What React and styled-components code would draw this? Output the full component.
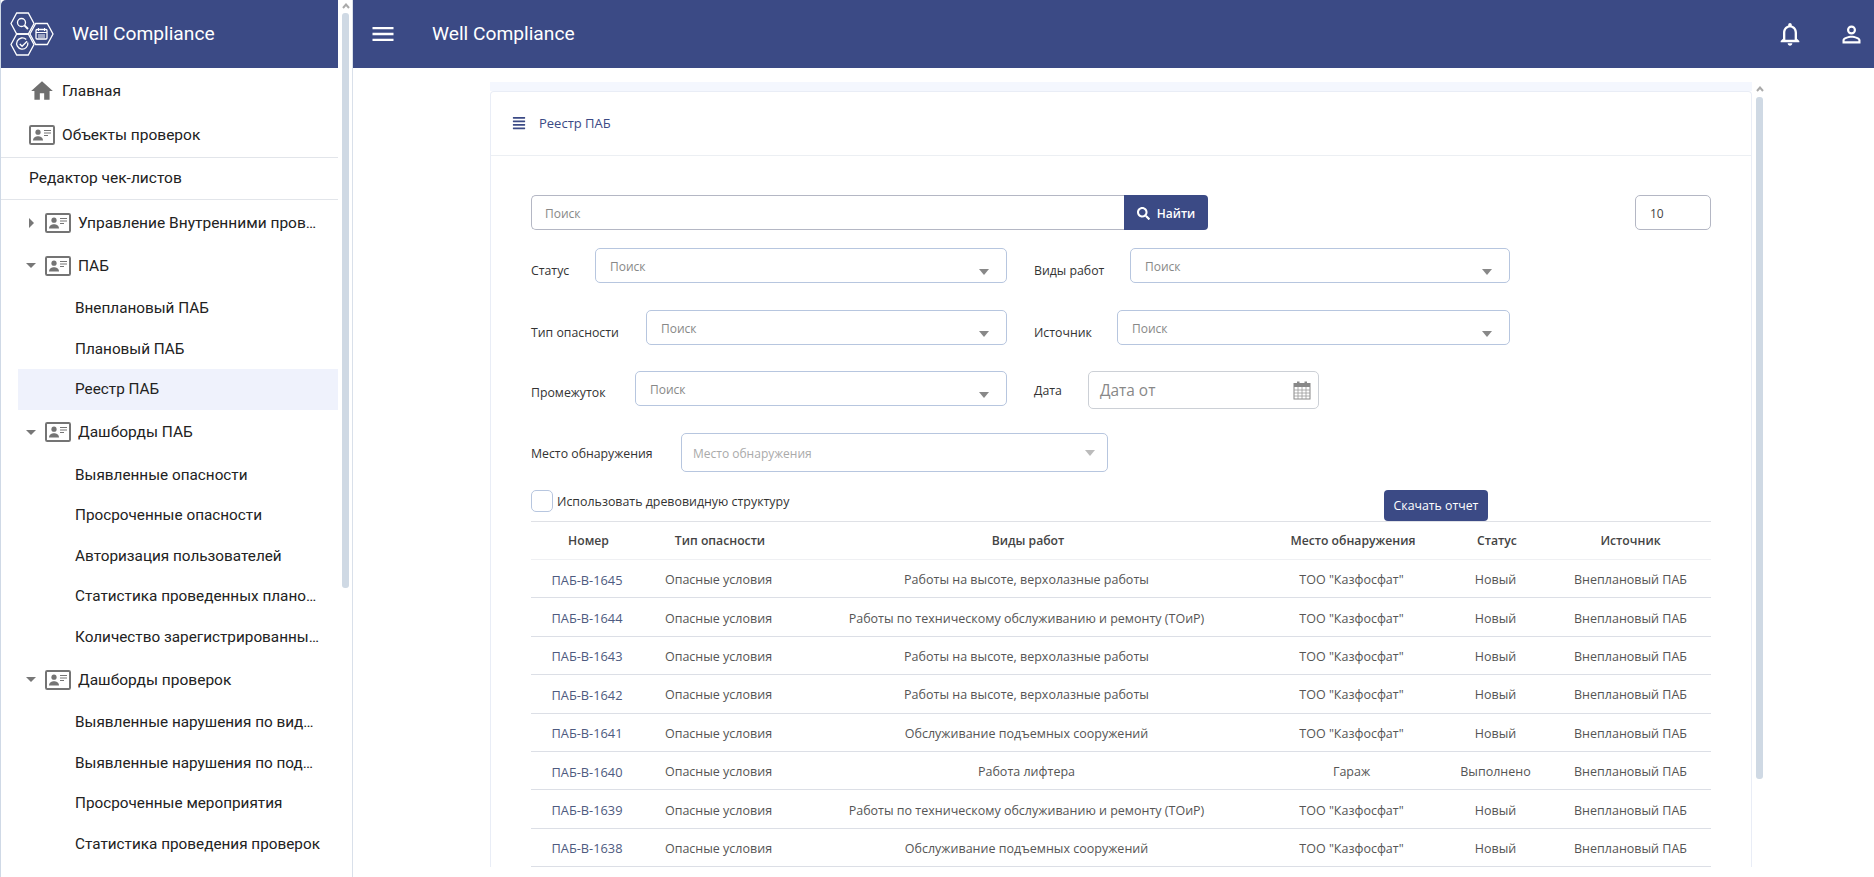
import styled, { createGlobalStyle } from "styled-components";
import { MdHome, MdMenu, MdNotificationsNone, MdPersonOutline } from "react-icons/md";
import { FaAlignJustify, FaSearch } from "react-icons/fa";

const BLUE = "#3b4a85";

const GlobalStyle = createGlobalStyle`
    html, body {
        margin: 0;
        height: 100%;
        overflow: hidden;
        background: #fff;
    }
    * {
        box-sizing: border-box;
    }
`

const Page = styled.div`
    display: flex;
    height: 877px;
    overflow: hidden;
`

const Sidebar = styled.aside`
    display: flex;
    width: 353px;
    flex-shrink: 0;
    height: 100%;
    border-left: 1px solid #cfd9e6;
    border-right: 1px solid #d9e0ea;
    font-family: Roboto, sans-serif;
`

const SideColumn = styled.div`
    width: 337px;
    flex-shrink: 0;
`

const Brand = styled.div`
    display: flex;
    align-items: center;
    height: 68px;
    padding-left: 7px;
    gap: 16px;
    background: ${BLUE};
    border-top-left-radius: 5px;
    color: #fff;
    font-size: 19.2px;
`

const BrandName = styled.span`
    margin-top: -2px;
`

const ScrollTrack = styled.div`
    display: flex;
    flex-direction: column;
    align-items: center;
    width: ${p => p.$w}px;
    margin-left: ${p => p.$left}px;
    flex-shrink: 0;
`

const ArrowUp = styled.svg`
    width: 8px;
    height: 6px;
    margin-top: ${p => p.$top}px;
    margin-bottom: ${p => p.$bottom}px;
`

const Thumb = styled.div`
    width: 7px;
    height: ${p => p.$h}px;
    border-radius: 3px;
    background: #cfd9e4;
`

const TopItem = styled.div`
    display: flex;
    align-items: center;
    height: 44px;
    padding-left: 28px;
    gap: 7px;
    font-size: 15.5px;
    color: #222;
`

const TopList = styled.div`
    padding-top: 1px;
    border-bottom: 1px solid #e2e5ea;
`

const EditorItem = styled.div`
    display: flex;
    align-items: center;
    height: 42px;
    padding: 0 0 2px 28px;
    border-bottom: 1px solid #e2e5ea;
    font-size: 15.5px;
    color: #222;
`

const Tree = styled.div`
    padding-top: 2px;
`

const GroupRow = styled.div`
    display: flex;
    align-items: center;
    height: 41px;
    margin-bottom: 2px;
    font-size: 15.5px;
    color: #222;
`

const CaretSlot = styled.div`
    display: flex;
    justify-content: center;
    width: 44px;
    padding-left: 16px;
    flex-shrink: 0;
`

const TreeCaret = styled.span`
    width: 0;
    height: 0;
    ${p => p.$open ? `
        border-left: 5px solid transparent;
        border-right: 5px solid transparent;
        border-top: 5px solid #777;
    ` : `
        border-top: 5px solid transparent;
        border-bottom: 5px solid transparent;
        border-left: 5px solid #777;
    `}
`

const GroupLabel = styled.span`
    margin-left: 7px;
    width: 244px;
    white-space: nowrap;
    overflow: hidden;
    text-overflow: ellipsis;
`

const SubList = styled.div`
    padding-bottom: 2px;
`

const SubItem = styled.div`
    height: 40.5px;
    line-height: 40.5px;
    margin-left: 17px;
    padding: 0 17px 0 57px;
    font-size: 15.3px;
    color: #222;
    white-space: nowrap;
    overflow: hidden;
    text-overflow: ellipsis;
    background: ${p => p.$active ? "#eff2fc" : "transparent"};
`

const Main = styled.div`
    display: flex;
    flex-direction: column;
    flex: 1;
    min-width: 0;
    font-family: "Open Sans", sans-serif;
`

const Topbar = styled.header`
    display: flex;
    align-items: center;
    height: 68px;
    flex-shrink: 0;
    padding: 0 9px 0 16px;
    background: ${BLUE};
    color: #fff;
    font-family: Roboto, sans-serif;
    font-size: 19.2px;
`

const Title = styled.div`
    margin: -2px 0 0 35px;
    flex: 1;
`

const TopIcons = styled.div`
    display: flex;
    align-items: center;
    gap: 34px;
`

const Content = styled.div`
    display: flex;
    flex: 1;
    min-height: 0;
    padding: 14px 0 0 137px;
    overflow: hidden;
`

const CardWrap = styled.div`
    width: 1262px;
    flex-shrink: 0;
    padding-top: 9px;
    background: linear-gradient(#f4f7fe 9px, #fff 9px);
`

const Card = styled.section`
    background: #fff;
    border: 1px solid #e9edf6;
    border-bottom: 0;
    border-radius: 4px 4px 0 0;
`

const CardHead = styled.div`
    display: flex;
    align-items: center;
    height: 64px;
    padding: 0 0 2px 21px;
    gap: 13px;
    border-bottom: 1px solid #eceff3;
    color: ${BLUE};
    font-size: 13px;
`

const CardBody = styled.div`
    padding: 39px 40px 0;
`

const SearchRow = styled.div`
    display: flex;
    justify-content: space-between;
    height: 35px;
`

const SearchGroup = styled.div`
    display: flex;
    width: 677px;
`

const SearchInput = styled.div`
    display: flex;
    align-items: center;
    flex: 1;
    padding: 2px 0 0 13px;
    border: 1px solid #b4b7c4;
    border-right: 0;
    border-radius: 5px 0 0 5px;
    font-size: 12px;
    color: #888;
`

const SearchButton = styled.button`
    display: flex;
    align-items: center;
    justify-content: center;
    gap: 7px;
    width: 84px;
    padding: 2px 0 0;
    border: 0;
    border-radius: 0 4px 4px 0;
    background: ${BLUE};
    color: #fff;
    font-family: inherit;
    font-size: 12px;
    font-weight: 600;
`

const LimitInput = styled.div`
    display: flex;
    align-items: center;
    width: 76px;
    padding: 2px 0 0 14px;
    border: 1px solid #b4b7c4;
    border-radius: 5px;
    font-size: 12px;
    color: #444;
`

const FilterRow = styled.div`
    display: flex;
    gap: 27px;
    margin-top: ${p => p.$top}px;
`

const Field = styled.div`
    display: flex;
    width: ${p => p.$w}px;
`

const FieldLabel = styled.label`
    width: ${p => p.$w}px;
    flex-shrink: 0;
    font-size: 12.3px;
    line-height: 16px;
    color: #333;
    padding-top: ${p => p.$top}px;
    white-space: nowrap;
`

const Select = styled.div`
    display: flex;
    align-items: center;
    justify-content: space-between;
    flex: 1;
    height: ${p => p.$h || 35}px;
    padding: 2px ${p => p.$light ? 12 : 17}px 0 ${p => p.$light ? 11 : 14}px;
    border: 1px solid #b7c6df;
    border-radius: 5px;
    font-size: 12px;
    color: ${p => p.$light ? "#aaa" : "#888"};
`

const SelectCaret = styled.span`
    width: 0;
    height: 0;
    margin-top: ${p => p.$light ? -2 : 10}px;
    border-left: 5px solid transparent;
    border-right: 5px solid transparent;
    border-top: 6px solid ${p => p.$light ? "#bbb" : "#888"};
`

const DateInput = styled.div`
    display: flex;
    align-items: center;
    justify-content: space-between;
    flex: 1;
    height: 38px;
    padding: 0 7px 0 11px;
    border: 1px solid #ccd0d6;
    border-radius: 5px;
    font-size: 15.4px;
    color: #888;
`

const ToolRow = styled.div`
    display: flex;
    justify-content: space-between;
    align-items: flex-start;
    height: 31px;
    margin-top: 18px;
`

const CheckLabel = styled.label`
    display: flex;
    align-items: center;
    gap: 4px;
    font-size: 12.4px;
    color: #333;
`

const CheckBox = styled.span`
    width: 22px;
    height: 22px;
    border: 1px solid #b7c6df;
    border-radius: 5px;
`

const DownloadButton = styled.button`
    width: 104px;
    height: 31px;
    margin-right: 223px;
    border: 0;
    border-radius: 4px;
    background: ${BLUE};
    color: #fff;
    font-family: inherit;
    font-size: 12.3px;
`

const Table = styled.table`
    width: 100%;
    table-layout: fixed;
    border-collapse: collapse;
    font-size: 12.5px;
`

const Th = styled.th`
    height: 38px;
    padding: 0;
    border-top: 1px solid #dfe1e6;
    border-bottom: 1px solid #eff0f3;
    font-size: 12.2px;
    font-weight: 600;
    color: #444;
`

const Td = styled.td`
    height: 38.4px;
    padding: 2px 3px 0 0;
    border-bottom: 1px solid #dcdfe6;
    text-align: center;
    font-size: ${p => p.$num ? 12.8 : 12.5}px;
    color: ${p => p.$num ? "#4e5a80" : "#555"};

    &:last-child {
        padding-right: 0;
    }
`

const Logo = () => (
    <svg width="48" height="46" viewBox="0 0 48 46" fill="none" stroke="#fff" strokeWidth="1.3">
        <path d="M3 12.5 8.7 2h11.6L26 12.5 20.3 23H8.7z" />
        <path d="M22 23l5.7-10.5h11.6L45 23l-5.7 10.5H27.7z" />
        <path d="M3 33.5 8.7 23h11.6L26 33.5 20.3 44H8.7z" />
        <circle cx="13.5" cy="11.5" r="4" />
        <path d="M16.4 14.4 20 18" strokeWidth="2" />
        <rect x="28" y="18.5" width="11" height="9.5" rx="1" />
        <path d="M30.5 17v3M36.5 17v3M28 21.5h11M30 24h7M30 26h7" strokeWidth="1" />
        <path d="M19.8 31.5a5.6 5.6 0 1 1-1.6-3" />
        <path d="M11.8 33l2.3 2.3 5-5" />
    </svg>
)

const IdCard = () => (
    <svg width="26" height="20" viewBox="0 0 26 20" style={{ flexShrink: 0 }}>
        <rect x="1" y="1" width="24" height="18" rx="1.2" fill="#fff" stroke="#747474" strokeWidth="2" />
        <circle cx="9" cy="7.2" r="2.6" fill="#747474" />
        <path d="M4 15.5c0-3 2.8-4.3 5-4.3s5 1.3 5 4.3z" fill="#747474" />
        <path d="M15 5.5h7M15 8h7M15 10.5h4" stroke="#747474" strokeWidth="1" />
    </svg>
)

const CalendarIcon = () => (
    <svg width="18" height="19" viewBox="0 0 18 19" fill="none">
        <rect x="4" y="0.5" width="2.5" height="4" fill="#888" />
        <rect x="11.5" y="0.5" width="2.5" height="4" fill="#888" />
        <rect x="1" y="2.5" width="16" height="3.5" fill="#888" />
        <rect x="1" y="2.5" width="16" height="15.5" stroke="#888" />
        <path d="M1 9h16M1 12h16M1 15h16M5 6v12M9 6v12M13 6v12" stroke="#999" strokeWidth="0.8" />
    </svg>
)

const Chevron = ({ top, bottom }) => (
    <ArrowUp $top={top} $bottom={bottom} viewBox="0 0 8 6" fill="none">
        <path d="M1 5l3-3.5L7 5" stroke="#aaa" strokeWidth="2" />
    </ArrowUp>
)

const tree = [
    { title: "Управление Внутренними проверками" },
    { title: "ПАБ", open: true, items: ["Внеплановый ПАБ", "Плановый ПАБ", "Реестр ПАБ"] },
    {
        title: "Дашборды ПАБ",
        open: true,
        items: [
            "Выявленные опасности",
            "Просроченные опасности",
            "Авторизация пользователей",
            "Статистика проведенных плановых ПАБ",
            "Количество зарегистрированных ПАБ",
        ],
    },
    {
        title: "Дашборды проверок",
        open: true,
        items: [
            "Выявленные нарушения по видам работ",
            "Выявленные нарушения по подразделениям",
            "Просроченные мероприятия",
            "Статистика проведения проверок",
        ],
    },
    { title: "" },
]

const HEIGHT_WORK = "Работы на высоте, верхолазные работы"
const REPAIR_WORK = "Работы по техническому обслуживанию и ремонту (ТОиР)"
const LIFT_WORK = "Обслуживание подъемных сооружений"

const rows = [
    ["ПАБ-В-1645", HEIGHT_WORK, 'ТОО "Казфосфат"', "Новый"],
    ["ПАБ-В-1644", REPAIR_WORK, 'ТОО "Казфосфат"', "Новый"],
    ["ПАБ-В-1643", HEIGHT_WORK, 'ТОО "Казфосфат"', "Новый"],
    ["ПАБ-В-1642", HEIGHT_WORK, 'ТОО "Казфосфат"', "Новый"],
    ["ПАБ-В-1641", LIFT_WORK, 'ТОО "Казфосфат"', "Новый"],
    ["ПАБ-В-1640", "Работа лифтера", "Гараж", "Выполнено"],
    ["ПАБ-В-1639", REPAIR_WORK, 'ТОО "Казфосфат"', "Новый"],
    ["ПАБ-В-1638", LIFT_WORK, 'ТОО "Казфосфат"', "Новый"],
]

const columns = [115, 148, 468, 182, 106, 161]
const headers = ["Номер", "Тип опасности", "Виды работ", "Место обнаружения", "Статус", "Источник"]

const App = () => {
    return (
        <Page>
            <GlobalStyle />
            <Sidebar>
                <SideColumn>
                    <Brand>
                        <Logo />
                        <BrandName>Well Compliance</BrandName>
                    </Brand>
                    <TopList>
                        <TopItem>
                            <MdHome size={26} color="#6f6f6f" />
                            Главная
                        </TopItem>
                        <TopItem>
                            <IdCard />
                            Объекты проверок
                        </TopItem>
                    </TopList>
                    <EditorItem>Редактор чек-листов</EditorItem>
                    <Tree>
                        {tree.map((group, i) => (
                            <div key={i}>
                                <GroupRow>
                                    <CaretSlot>
                                        {group.title && <TreeCaret $open={group.open} />}
                                    </CaretSlot>
                                    <IdCard />
                                    <GroupLabel>{group.title}</GroupLabel>
                                </GroupRow>
                                {group.items && (
                                    <SubList>
                                        {group.items.map(item => (
                                            <SubItem key={item} $active={item === "Реестр ПАБ"}>{item}</SubItem>
                                        ))}
                                    </SubList>
                                )}
                            </div>
                        ))}
                    </Tree>
                </SideColumn>
                <ScrollTrack $w={7} $left={4}>
                    <Chevron top={3} bottom={4} />
                    <Thumb $h={575} />
                </ScrollTrack>
            </Sidebar>
            <Main>
                <Topbar>
                    <MdMenu size={28} />
                    <Title>Well Compliance</Title>
                    <TopIcons>
                        <MdNotificationsNone size={28} />
                        <MdPersonOutline size={27} />
                    </TopIcons>
                </Topbar>
                <Content>
                    <CardWrap>
                        <Card>
                            <CardHead>
                                <FaAlignJustify size={14} />
                                Реестр ПАБ
                            </CardHead>
                            <CardBody>
                                <SearchRow>
                                    <SearchGroup>
                                        <SearchInput>Поиск</SearchInput>
                                        <SearchButton><FaSearch size={13} />Найти</SearchButton>
                                    </SearchGroup>
                                    <LimitInput>10</LimitInput>
                                </SearchRow>
                                <FilterRow $top={18}>
                                    <Field $w={476}>
                                        <FieldLabel $w={64} $top={15}>Статус</FieldLabel>
                                        <Select>Поиск<SelectCaret /></Select>
                                    </Field>
                                    <Field $w={476}>
                                        <FieldLabel $w={96} $top={15}>Виды работ</FieldLabel>
                                        <Select>Поиск<SelectCaret /></Select>
                                    </Field>
                                </FilterRow>
                                <FilterRow $top={27}>
                                    <Field $w={476}>
                                        <FieldLabel $w={115} $top={15}>Тип опасности</FieldLabel>
                                        <Select>Поиск<SelectCaret /></Select>
                                    </Field>
                                    <Field $w={476}>
                                        <FieldLabel $w={83} $top={15}>Источник</FieldLabel>
                                        <Select>Поиск<SelectCaret /></Select>
                                    </Field>
                                </FilterRow>
                                <FilterRow $top={26}>
                                    <Field $w={476}>
                                        <FieldLabel $w={104} $top={14}>Промежуток</FieldLabel>
                                        <Select>Поиск<SelectCaret /></Select>
                                    </Field>
                                    <Field $w={285}>
                                        <FieldLabel $w={54} $top={12}>Дата</FieldLabel>
                                        <DateInput>Дата от<CalendarIcon /></DateInput>
                                    </Field>
                                </FilterRow>
                                <FilterRow $top={24}>
                                    <Field $w={577}>
                                        <FieldLabel $w={150} $top={13}>Место обнаружения</FieldLabel>
                                        <Select $h={39} $light>Место обнаружения<SelectCaret $light /></Select>
                                    </Field>
                                </FilterRow>
                                <ToolRow>
                                    <CheckLabel><CheckBox />Использовать древовидную структуру</CheckLabel>
                                    <DownloadButton>Скачать отчет</DownloadButton>
                                </ToolRow>
                                <Table>
                                    <colgroup>
                                        {columns.map((w, i) => <col key={i} width={w} />)}
                                    </colgroup>
                                    <thead>
                                        <tr>
                                            {headers.map(h => <Th key={h}>{h}</Th>)}
                                        </tr>
                                    </thead>
                                    <tbody>
                                        {rows.map(r => (
                                            <tr key={r[0]}>
                                                <Td $num>{r[0]}</Td>
                                                <Td>Опасные условия</Td>
                                                <Td>{r[1]}</Td>
                                                <Td>{r[2]}</Td>
                                                <Td>{r[3]}</Td>
                                                <Td>Внеплановый ПАБ</Td>
                                            </tr>
                                        ))}
                                    </tbody>
                                </Table>
                            </CardBody>
                        </Card>
                    </CardWrap>
                    <ScrollTrack $w={7} $left={4}>
                        <Chevron top={4} bottom={5} />
                        <Thumb $h={682} />
                    </ScrollTrack>
                </Content>
            </Main>
        </Page>
    )
}

export default App;
